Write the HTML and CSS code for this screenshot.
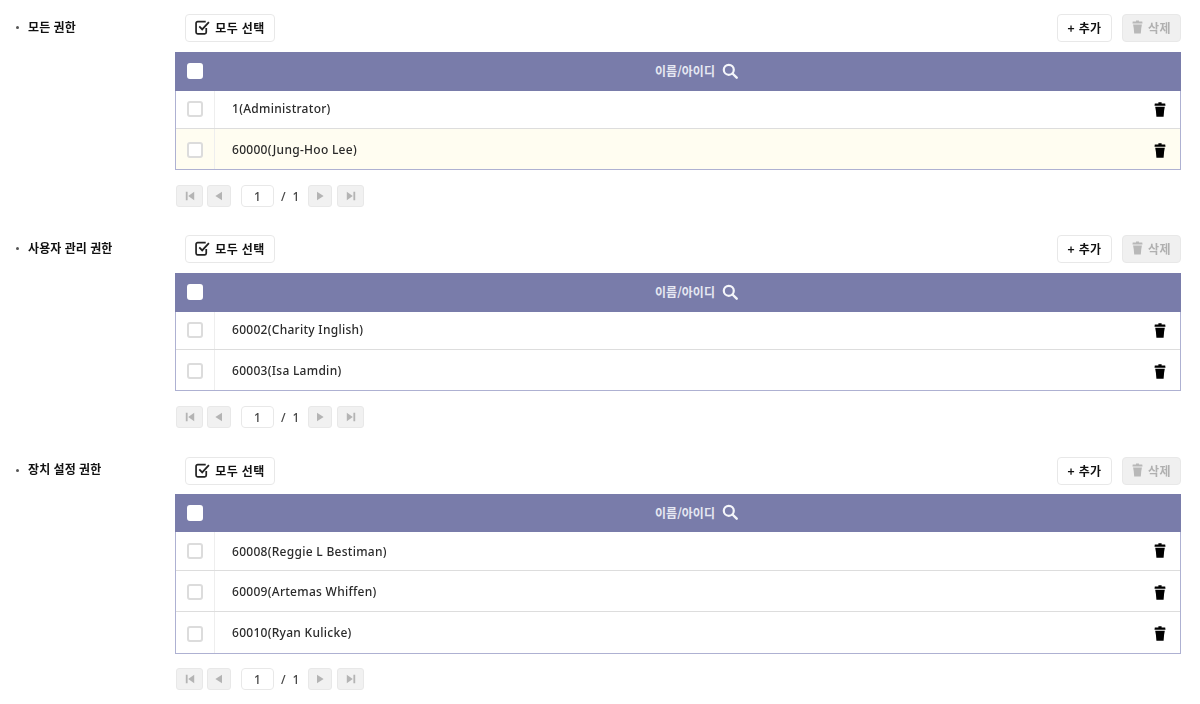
FILE: index.html
```html
<!DOCTYPE html>
<html lang="ko">
<head>
<meta charset="utf-8">
<title>권한</title>
<link rel="stylesheet" href="styles.css">
</head>
<body>
<svg class="defs" width="0" height="0">
  <symbol id="trash" viewBox="0 0 12 15"><path d="M4.4 0.3h3.2v1.1H11.2l.3 2.4H.5l.3-2.4H4.4z"/><path d="M1.2 4.8h9.6l-.7 4-.5 5.9H2.4l-.5-5.9z"/></symbol>
  <symbol id="first" viewBox="0 0 10 10"><path d="M1.5 1.5h1.5v7H1.5zM8.5 1.5v7L3.5 5z"/></symbol>
  <symbol id="prev" viewBox="0 0 10 10"><path d="M7.5 1.5v7L2 5z"/></symbol>
  <symbol id="next" viewBox="0 0 10 10"><path d="M2.5 1.5v7L8 5z"/></symbol>
  <symbol id="last" viewBox="0 0 10 10"><path d="M7 1.5h1.5v7H7zM1.5 1.5v7L6.5 5z"/></symbol>
  <symbol id="search" viewBox="0 0 16 16"><circle cx="6.8" cy="6.8" r="5" fill="none" stroke="currentColor" stroke-width="2.2"/><path d="M10.5 10.5l4.2 4.2" stroke="currentColor" stroke-width="2.4" stroke-linecap="round"/></symbol>
  <symbol id="checkall" viewBox="0 0 14 14"><path d="M10.5 7.5v4a1.5 1.5 0 0 1-1.5 1.5H2.5A1.5 1.5 0 0 1 1 11.5V3a1.5 1.5 0 0 1 1.5-1.5H10" fill="none" stroke="currentColor" stroke-width="1.6"/><path d="M4 6l2.7 2.8L13 2" fill="none" stroke="currentColor" stroke-width="1.7"/></symbol>
</svg>

<section class="group">
  <h2 class="group-title">모든 권한</h2>
  <div class="group-body">
    <div class="toolbar">
      <button class="btn btn-all"><svg class="ic-check"><use href="#checkall"/></svg>모두 선택</button>
      <div class="toolbar-right">
        <button class="btn btn-add">+ 추가</button>
        <button class="btn btn-del"><svg class="ic-del"><use href="#trash"/></svg>삭제</button>
      </div>
    </div>
    <div class="table">
      <div class="thead"><span class="box box-head"></span><span class="thead-title">이름/아이디<svg class="ic-search"><use href="#search"/></svg></span></div>
      <div class="row row-38"><span class="cell-check"><span class="box"></span></span><span class="cell-name">1(Administrator)</span><svg class="ic-trash"><use href="#trash"/></svg></div>
      <div class="row row-40 row-hl"><span class="cell-check"><span class="box"></span></span><span class="cell-name">60000(Jung-Hoo Lee)</span><svg class="ic-trash"><use href="#trash"/></svg></div>
    </div>
    <div class="pager">
      <button class="pg pg-first"><svg><use href="#first"/></svg></button>
      <button class="pg pg-prev"><svg><use href="#prev"/></svg></button>
      <span class="pg-input">1</span><span class="pg-total">/ &nbsp;1</span>
      <button class="pg pg-next"><svg><use href="#next"/></svg></button>
      <button class="pg pg-last"><svg><use href="#last"/></svg></button>
    </div>
  </div>
</section>

<section class="group group-second">
  <h2 class="group-title">사용자 관리 권한</h2>
  <div class="group-body">
    <div class="toolbar">
      <button class="btn btn-all"><svg class="ic-check"><use href="#checkall"/></svg>모두 선택</button>
      <div class="toolbar-right">
        <button class="btn btn-add">+ 추가</button>
        <button class="btn btn-del"><svg class="ic-del"><use href="#trash"/></svg>삭제</button>
      </div>
    </div>
    <div class="table">
      <div class="thead"><span class="box box-head"></span><span class="thead-title">이름/아이디<svg class="ic-search"><use href="#search"/></svg></span></div>
      <div class="row row-38"><span class="cell-check"><span class="box"></span></span><span class="cell-name">60002(Charity Inglish)</span><svg class="ic-trash"><use href="#trash"/></svg></div>
      <div class="row row-40"><span class="cell-check"><span class="box"></span></span><span class="cell-name">60003(Isa Lamdin)</span><svg class="ic-trash"><use href="#trash"/></svg></div>
    </div>
    <div class="pager">
      <button class="pg pg-first"><svg><use href="#first"/></svg></button>
      <button class="pg pg-prev"><svg><use href="#prev"/></svg></button>
      <span class="pg-input">1</span><span class="pg-total">/ &nbsp;1</span>
      <button class="pg pg-next"><svg><use href="#next"/></svg></button>
      <button class="pg pg-last"><svg><use href="#last"/></svg></button>
    </div>
  </div>
</section>

<section class="group group-third">
  <h2 class="group-title">장치 설정 권한</h2>
  <div class="group-body">
    <div class="toolbar">
      <button class="btn btn-all"><svg class="ic-check"><use href="#checkall"/></svg>모두 선택</button>
      <div class="toolbar-right">
        <button class="btn btn-add">+ 추가</button>
        <button class="btn btn-del"><svg class="ic-del"><use href="#trash"/></svg>삭제</button>
      </div>
    </div>
    <div class="table">
      <div class="thead"><span class="box box-head"></span><span class="thead-title">이름/아이디<svg class="ic-search"><use href="#search"/></svg></span></div>
      <div class="row row-39"><span class="cell-check"><span class="box"></span></span><span class="cell-name">60008(Reggie L Bestiman)</span><svg class="ic-trash"><use href="#trash"/></svg></div>
      <div class="row row-41"><span class="cell-check"><span class="box"></span></span><span class="cell-name">60009(Artemas Whiffen)</span><svg class="ic-trash"><use href="#trash"/></svg></div>
      <div class="row row-41"><span class="cell-check"><span class="box"></span></span><span class="cell-name">60010(Ryan Kulicke)</span><svg class="ic-trash"><use href="#trash"/></svg></div>
    </div>
    <div class="pager">
      <button class="pg pg-first"><svg><use href="#first"/></svg></button>
      <button class="pg pg-prev"><svg><use href="#prev"/></svg></button>
      <span class="pg-input">1</span><span class="pg-total">/ &nbsp;1</span>
      <button class="pg pg-next"><svg><use href="#next"/></svg></button>
      <button class="pg pg-last"><svg><use href="#last"/></svg></button>
    </div>
  </div>
</section>
</body>
</html>
```
FILE: styles.css
```css
* { box-sizing: border-box; }
html, body { margin: 0; padding: 0; }
body {
  width: 1200px;
  height: 704px;
  overflow: hidden;
  background: #fff;
  padding-top: 14px;
  color: #222;
  font-family: "Noto Sans", "Noto Sans CJK KR", sans-serif;
  font-size: 12px;
  filter: blur(0.35px);
}
.defs { position: absolute; }
.group { display: flex; padding-right: 19px; margin-bottom: 28px; }
.group-second { margin-bottom: 29px; }
.group-title {
  width: 175px;
  flex: none;
  margin: 0;
  padding: 6px 0 0 28px;
  position: relative;
  font-size: 12px;
  line-height: 16px;
  font-weight: 700;
  letter-spacing: 0.1px;
  color: #111;
}
.group-third .group-title { padding-top: 5px; }
.group-title::before {
  content: "";
  position: absolute;
  left: 16px;
  top: 12px;
  width: 3px;
  height: 3px;
  border-radius: 50%;
  background: #555;
}
.group-body { flex: 1; min-width: 0; }
.toolbar { display: flex; justify-content: space-between; padding-left: 10px; margin-bottom: 10px; }
.group-third .toolbar { margin-bottom: 9px; }
.toolbar-right { display: flex; gap: 10px; }
.btn {
  height: 28px;
  display: inline-flex;
  align-items: center;
  justify-content: center;
  padding: 0 0 2px;
  background: #fff;
  border: 1px solid #e8e8e8;
  border-radius: 4px;
  font: 700 12px "Noto Sans CJK KR", "Noto Sans", sans-serif;
  letter-spacing: 0.4px;
  color: #111;
}
.btn-all { width: 90px; gap: 5px; }
.btn-add { width: 55px; }
.btn-del { width: 59px; gap: 5px; background: #f0f0f0; color: #b0b0b0; }
.ic-check { width: 15px; height: 15px; color: #222; }
.ic-del { width: 11px; height: 14px; fill: #b8b8b8; }
.table { border: 1px solid #aeb1d2; border-top: 0; }
.thead {
  height: 39px;
  margin: 0 -1px;
  background: #797caa;
  display: flex;
  align-items: center;
  position: relative;
}
.group-third .thead { height: 38px; }
.thead-title {
  width: 100%;
  padding: 0 0 2px 37px;
  display: flex;
  justify-content: center;
  align-items: center;
  gap: 7px;
  color: #e6e8f2;
  font: 700 12px "Noto Sans CJK KR", "Noto Sans", sans-serif;
}
.box {
  display: block;
  width: 16px;
  height: 16px;
  background: #fff;
  border: 2px solid #dcdcdc;
  border-radius: 3px;
}
.box-head { position: absolute; left: 12px; top: 11px; border-color: #fff; }
.ic-search { width: 16px; height: 16px; color: #f4f5fa; }
.row {
  display: flex;
  align-items: center;
  border-bottom: 1px solid #ddd;
}
.row:last-child { border-bottom: 0; }
.row-38 { height: 38px; }
.row-39 { height: 39px; }
.row-40 { height: 40px; }
.row-41 { height: 41px; }
.row-38 .box { margin-top: -2px; }
.row-40 .box, .row-41 .box { margin-top: 2px; }
.row-38 .cell-name { margin-top: -2px; }
.row-hl { background: #fffdf1; }
.cell-check {
  width: 39px;
  height: 100%;
  flex: none;
  display: flex;
  align-items: center;
  justify-content: center;
  border-right: 1px solid #eee;
}
.cell-name { flex: 1; padding-left: 17px; color: #2a2a2a; font-weight: 500; letter-spacing: 0.28px; }
.ic-trash { width: 12px; height: 15px; margin-right: 14px; fill: #000; margin-top: -1px; }
.row-40 .ic-trash, .row-41 .ic-trash { margin-top: 2px; }
.pager { display: flex; align-items: center; margin-top: 15px; height: 22px; padding-left: 1px; font-weight: 500; }
.group-third .pager { margin-top: 14px; }
.pg {
  width: 27px;
  height: 22px;
  padding: 0;
  display: flex;
  align-items: center;
  justify-content: center;
  background: #f1f1f1;
  border: 1px solid #e8e8e8;
  border-radius: 3px;
}
.pg svg { width: 12px; height: 12px; fill: #b4b4b4; }
.pg-prev { width: 24px; margin-left: 4px; }
.pg-next { width: 24px; }
.pg-last { width: 27px; margin-left: 5px; }
.pg-input {
  width: 33px;
  height: 22px;
  margin-left: 10px;
  display: flex;
  align-items: center;
  justify-content: center;
  border: 1px solid #e8e8e8;
  border-radius: 4px;
  color: #444;
}
.pg-total { width: 34px; padding-left: 7px; color: #444; white-space: nowrap; letter-spacing: 0.2px; }
```
